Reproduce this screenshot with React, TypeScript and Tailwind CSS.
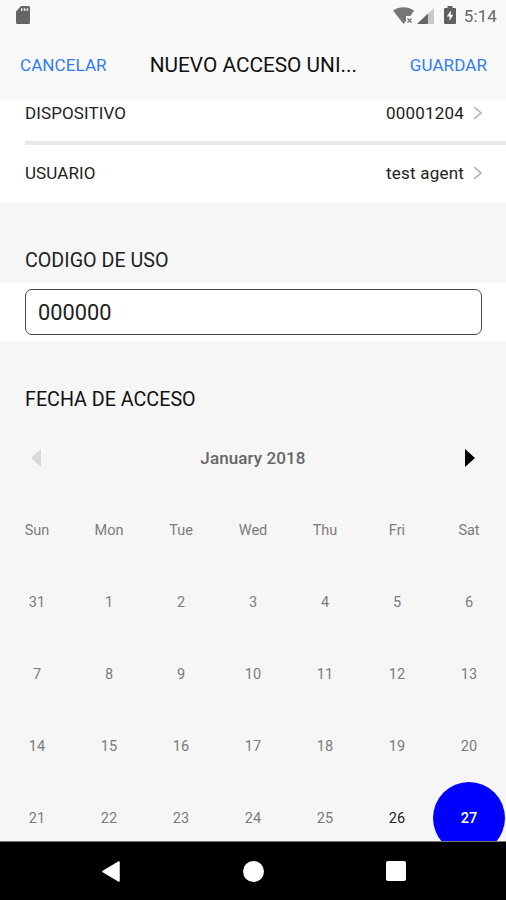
import clsx from "clsx";

const weekDays = ["Sun", "Mon", "Tue", "Wed", "Thu", "Fri", "Sat"];

const weeks = [
  [31, 1, 2, 3, 4, 5, 6],
  [7, 8, 9, 10, 11, 12, 13],
  [14, 15, 16, 17, 18, 19, 20],
  [21, 22, 23, 24, 25, 26, 27],
];

const today = 26;
const selected = 27;

function StatusBar() {
  return (
    <div className="flex h-8 shrink-0 items-center pl-4 pr-[9px] text-[#666]">
      <svg width="14" height="18" viewBox="0 0 14 18" className="-mt-[2px]">
        <path d="M5 0H12.500Q14 0 14 1.500V16.500Q14 18 12.500 18H1.500Q0 18 0 16.500V5.500Z" fill="#656565" />
        <path d="M5 2.200H6.500V5H5ZM7.800 2.200H9.300V5H7.800ZM10.600 2.200H12.100V5H10.600Z" fill="#eee" />
      </svg>
      <div className="ml-auto flex items-center">
        <svg width="21" height="17" viewBox="0 0 21 17" className="-mt-[1px]">
          <path d="M0 3.500C5.500 -1 15.500 -1 21 3.500L17.500 9H13V14L10.500 17Z" fill="#777" />
          <path d="M14.500 11.500L18.500 15.500M18.500 11.500L14.500 15.500" stroke="#777" strokeWidth="1.500" />
        </svg>
        <svg width="17" height="16" viewBox="0 0 17 16" className="ml-[3px] -mt-[1px]">
          <path d="M17 0V16H0Z" fill="#c9c9c9" />
          <path d="M11 5.600V16H0Z" fill="#666" />
        </svg>
        <svg width="12" height="18" viewBox="0 0 12 18" className="ml-[10px] -mt-[2px]">
          <path d="M3.500 0H8.500V2H11Q12 2 12 3V17Q12 18 11 18H1Q0 18 0 17V3Q0 2 1 2H3.500Z" fill="#606060" />
          <path d="M6.800 4.500L2.800 10.500H5.500V15L9.300 8.800H6.800Z" fill="#f9f9f9" />
        </svg>
        <span className="ml-[8px] text-[17px] leading-none tracking-[0.1px]">5:14</span>
      </div>
    </div>
  );
}

function Row({ label, value }: { label: string; value: string }) {
  return (
    <div className="flex items-center pr-6 text-[17px] leading-5 text-[#222]">
      <span className="flex-1 tracking-[0.1px]">{label}</span>
      <span className="tracking-[0.2px]">{value}</span>
      <svg width="9" height="14" viewBox="0 0 9 14" fill="none" className="ml-[9px] -mt-[1px]">
        <path d="M1 1L8 7L1 13" stroke="#b0b0b0" strokeWidth="1.600" />
      </svg>
    </div>
  );
}

function Calendar() {
  return (
    <div className="px-px">
      <div className="flex h-[72px] items-center justify-between px-[30px]">
        <svg width="10" height="18" viewBox="0 0 10 18">
          <path d="M10 0V18L0 9Z" fill="#d9d9d9" />
        </svg>
        <span className="pt-[2px] text-[17px] font-medium tracking-[0.1px] text-[#666]">January 2018</span>
        <svg width="10" height="18" viewBox="0 0 10 18">
          <path d="M0 0V18L10 9Z" fill="#000" />
        </svg>
      </div>
      <div className="grid grid-cols-7 text-center text-[14.500px] text-[#7c7c7c]">
        {weekDays.map((day) => (
          <div key={day} className="flex h-[72px] items-center justify-center pt-[2px]">
            {day}
          </div>
        ))}
        {weeks.flat().map((day) => (
          <div
            key={day}
            className={clsx(
              "flex h-[72px] items-center justify-center rounded-full pt-[2px]",
              day === today && "text-[#222]",
              day === selected && "bg-[#0000ff] font-medium text-white"
            )}
          >
            {day}
          </div>
        ))}
      </div>
    </div>
  );
}

function NavBar() {
  return (
    <div className="flex h-[59px] shrink-0 items-center justify-between border-t border-[#777] bg-black pl-[102px] pr-[100px]">
      <svg width="18" height="21" viewBox="0 0 18 21">
        <path d="M17 1V20L1 10.500Z" fill="#fff" stroke="#fff" strokeWidth="1.500" strokeLinejoin="round" />
      </svg>
      <div className="size-[21px] rounded-full bg-white" />
      <div className="size-5 rounded-[2px] bg-white" />
    </div>
  );
}

export default function App() {
  return (
    <div className="flex h-[900px] w-[506px] flex-col overflow-hidden bg-[#f6f6f6] font-['Roboto',sans-serif]">
      <div className="h-[100px] shrink-0 bg-[#f9f9f9]">
        <StatusBar />
        <div className="flex h-[67px] items-center pl-[20px] pr-[19px] pt-px text-[17px] text-[#2f7cf6]">
          <button className="tracking-[0.1px]">CANCELAR</button>
          <h1 className="ml-[43px] text-[20.800px] text-[#111]">NUEVO ACCESO UNI...</h1>
          <button className="ml-auto tracking-[0.1px]">GUARDAR</button>
        </div>
      </div>

      <main className="min-h-0 flex-1 overflow-hidden">
        <div className="bg-white pl-[25px]">
          <div className="h-[45px] border-b-4 border-[#e8e8e8] pt-[3px]">
            <Row label="DISPOSITIVO" value="00001204" />
          </div>
          <div className="h-[57px] pt-[18px]">
            <Row label="USUARIO" value="test agent" />
          </div>
        </div>

        <h2 className="h-20 pl-[25px] pt-[47px] text-[19.700px] leading-6 text-[#222]">CODIGO DE USO</h2>
        <div className="h-[59px] bg-white pl-[25px] pr-6 pt-[7px]">
          <input
            defaultValue="000000"
            className="h-[46px] w-full rounded-[7px] border border-b-[1.500px] border-[#444] px-3 text-[21.800px] text-[#222] outline-none"
          />
        </div>

        <h2 className="h-[81px] pl-[25px] pt-[47px] text-[19.700px] leading-6 text-[#111]">FECHA DE ACCESO</h2>
        <Calendar />
      </main>

      <NavBar />
    </div>
  );
}
